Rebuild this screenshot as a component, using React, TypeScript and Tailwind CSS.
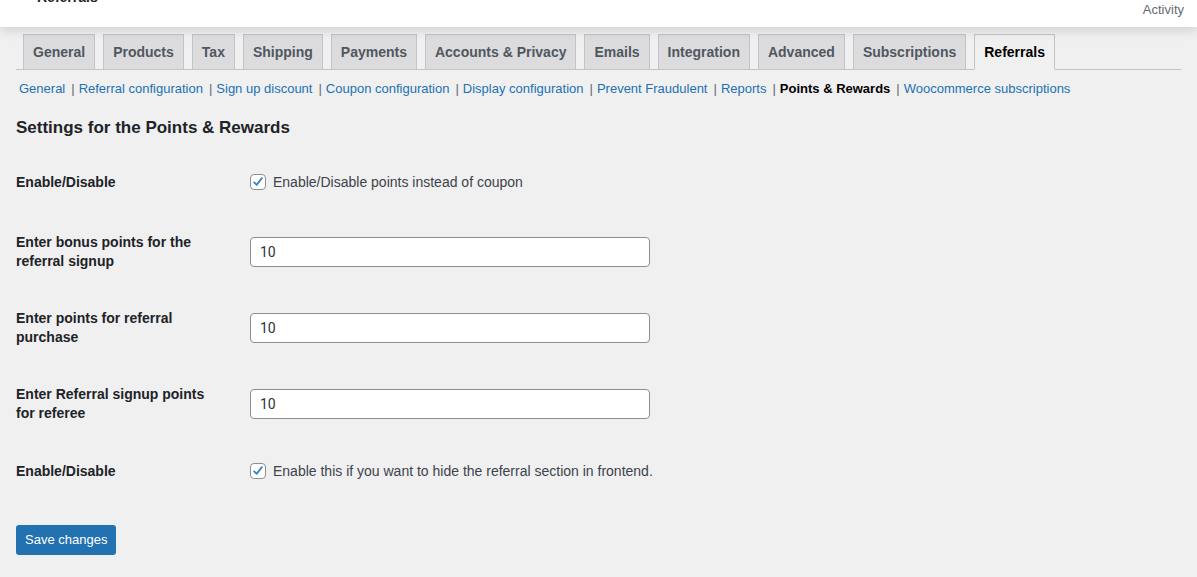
import React from 'react';

const tabs = [
  'General',
  'Products',
  'Tax',
  'Shipping',
  'Payments',
  'Accounts & Privacy',
  'Emails',
  'Integration',
  'Advanced',
  'Subscriptions',
  'Referrals',
];

const sections = [
  'General',
  'Referral configuration',
  'Sign up discount',
  'Coupon configuration',
  'Display configuration',
  'Prevent Fraudulent',
  'Reports',
  'Points & Rewards',
  'Woocommerce subscriptions',
];

const Checkbox: React.FC = () => (
  <span className="flex h-4 w-4 shrink-0 items-center justify-center rounded-[4px] border border-[#8c8f94] bg-white">
    <svg viewBox="0 0 20 20" className="h-[14px] w-[14px]">
      <path d="M4.5 10.5 L8.2 14 L15.5 4.5" fill="none" stroke="#3582c4" strokeWidth="2.6" strokeLinecap="round" strokeLinejoin="round" />
    </svg>
  </span>
);

const TextRow: React.FC<{ label: string }> = ({ label }) => (
  <div className="flex h-[76px] items-center">
    <div className="w-[234px] pr-[34px] text-[14px] font-bold leading-[19px] text-[#1d2327]">{label}</div>
    <div className="flex h-[30px] w-[400px] items-center rounded-[4px] border border-[#8c8f94] bg-white px-[9px] font-['Roboto',sans-serif] text-[14px] text-[#2c3338]">
      10
    </div>
  </div>
);

const CheckRow: React.FC<{ text: string }> = ({ text }) => (
  <div className="flex h-[58px] items-center">
    <div className="w-[234px] text-[14px] font-bold text-[#1d2327]">Enable/Disable</div>
    <label className="flex items-center gap-[7px] text-[14px] text-[#3c434a]">
      <Checkbox />
      {text}
    </label>
  </div>
);

const App: React.FC = () => {
  return (
    <div className="h-[577px] w-full overflow-hidden bg-[#f0f0f1] font-['Liberation_Sans',sans-serif]">
      <header className="relative z-10 flex h-[27px] items-start justify-between bg-white pl-[37px] pr-[13px] shadow-[0_3px_12px_rgba(0,0,0,0.14)]">
        <span className="-mt-[13px] text-[14px] font-bold text-[#1d2327]">Referrals</span>
        <span className="mt-0 text-[13px] text-[#646970]">Activity</span>
      </header>

      <nav className="mx-[16px] mt-[7px] flex items-end gap-[8px] border-b border-[#c3c4c7] pl-[7px]">
        {tabs.map((t) => {
          const active = t === 'Referrals';
          return (
            <div
              key={t}
              className={
                active
                  ? '-mb-px flex h-[36px] items-center border border-b-[#f0f0f1] border-[#c3c4c7] bg-[#f0f0f1] px-[9px] text-[14px] font-bold text-black'
                  : '-mb-px flex h-[36px] items-center border border-[#c3c4c7] bg-[#dcdcde] px-[9px] text-[14px] font-bold text-[#50575e]'
              }
            >
              {t}
            </div>
          );
        })}
      </nav>

      <div className="ml-[19px] mt-[10px] flex items-center text-[13px] leading-[18px]">
        {sections.map((s, i) => (
          <React.Fragment key={s}>
            {i > 0 && <span className="ml-[6px] mr-[4px] text-[#646970]">|</span>}
            {s === 'Points & Rewards' ? (
              <span className="font-bold text-black">{s}</span>
            ) : (
              <a className="text-[#2271b1]">{s}</a>
            )}
          </React.Fragment>
        ))}
      </div>

      <div className="px-[16px]">
        <h2 className="mt-[19px] text-[17px] font-bold leading-[22px] text-[#1d2327]">
          Settings for the Points &amp; Rewards
        </h2>

        <div className="mt-[14px]">
          <CheckRow text="Enable/Disable points instead of coupon" />
          <div className="mt-[3px]">
            <TextRow label="Enter bonus points for the referral signup" />
            <TextRow label="Enter points for referral purchase" />
            <TextRow label="Enter Referral signup points for referee" />
          </div>
          <CheckRow text="Enable this if you want to hide the referral section in frontend." />
        </div>

        <button className="mt-[25px] h-[30px] rounded-[3px] bg-[#2271b1] px-[9px] text-[13px] text-white">
          Save changes
        </button>
      </div>
    </div>
  );
};

export default App;
